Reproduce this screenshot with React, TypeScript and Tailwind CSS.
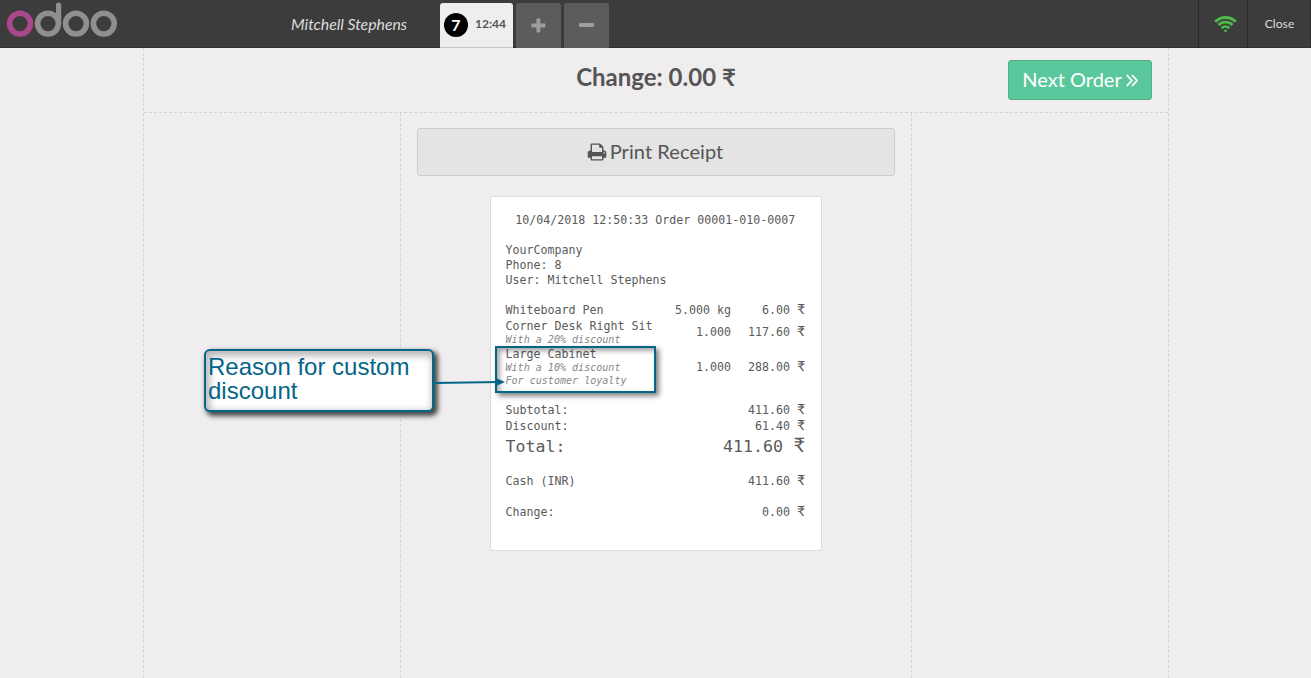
import React from "react";

const mono = "font-['DejaVu_Sans_Mono',monospace]";

function Rupee({ className }: { className: string }) {
  return (
    <span className={`inline-flex justify-end font-['Lato','DejaVu_Sans',sans-serif] ${className}`}>
      ₹
    </span>
  );
}

function Logo() {
  return (
    <svg className="ml-[6px] h-[38px] w-[112px]" viewBox="0 0 112 38" fill="none" strokeWidth="5.6" aria-label="odoo">
      <circle cx="14" cy="23.6" r="10.4" stroke="#a8478a" />
      <g stroke="#8f8f8f">
        <circle cx="42" cy="23.6" r="10.4" />
        <circle cx="70" cy="23.6" r="10.4" />
        <circle cx="97.8" cy="23.6" r="10.4" />
        <path d="M52.6 23.6V5" strokeLinecap="round" strokeWidth="5.2" />
      </g>
    </svg>
  );
}

function Wifi() {
  return (
    <svg className="h-[17px] w-[23px]" viewBox="0 0 23 17" fill="none" stroke="#4eb84a" strokeWidth="2.900">
      <path d="M1.200 5.700a14.600 14.600 0 0 1 20.600 0" />
      <path d="M4.500 9a9.900 9.900 0 0 1 14 0" />
      <path d="M7.700 12.200a5.400 5.400 0 0 1 7.600 0" />
      <path d="M11.500 16.600l-2-2a2.900 2.900 0 0 1 4 0z" fill="#4eb84a" stroke="none" />
    </svg>
  );
}

function Printer() {
  return (
    <svg className="mr-[3px] h-[20px] w-[20px]" viewBox="0 0 1792 1792" fill="currentColor">
      <path d="M448 1536h896v-256h-896v256zm0-640h896v-384h-160q-40 0-68-28t-28-68v-160h-640v640zm1152 64q0-26-19-45t-45-19-45 19-19 45 19 45 45 19 45-19 19-45zm128 0v416q0 13-9.5 22.5t-22.5 9.5h-224v160q0 40-28 68t-68 28h-960q-40 0-68-28t-28-68v-160h-224q-13 0-22.5-9.5t-9.5-22.5v-416q0-79 56.5-135.5t135.5-56.5h64v-544q0-40 28-68t68-28h672q40 0 88 20t76 48l152 152q28 28 48 76t20 88v256h64q79 0 135.5 56.5t56.5 135.5z" />
    </svg>
  );
}

function Header() {
  return (
    <header className="flex h-12 shrink-0 bg-[#3c3c3c] shadow-[inset_0_-1px_0_#352f31]">
      <div className="w-[291px]">
        <Logo />
      </div>
      <div className="w-[149px] pt-[12px] text-[15.8px] leading-6 text-[#dddddd] italic">Mitchell Stephens</div>
      <div className="flex items-start gap-[3px] pt-[3px]">
        <div className="flex h-[45px] w-[73px] items-center rounded-t-[3px] border-b border-[#c5c5c5] bg-[#eeeeee] pl-1">
          <span className="flex size-6 items-center justify-center rounded-full bg-black text-[16px] font-bold text-white">7</span>
          <span className="ml-[7px] pb-[2px] text-[12px] font-bold text-[#555555]">12:44</span>
        </div>
        <div className="flex h-[45px] w-[45px] items-center justify-center rounded-t-[3px] bg-[#5c5c5c] pb-px">
          <svg className="size-[15px]" viewBox="0 0 15 15" fill="#9e9e9e">
            <path d="M5.5 1.2a.8.8 0 0 1 .8-.8h2.2a.8.8 0 0 1 .8.8v4.4h4.4a.8.8 0 0 1 .8.8v2.2a.8.8 0 0 1-.8.8H9.300v4.400a.8.8 0 0 1-.8.8H6.300a.8.8 0 0 1-.8-.8V9.400H1.200a.8.8 0 0 1-.8-.8V6.400a.8.8 0 0 1 .8-.8h4.300z" />
          </svg>
        </div>
        <div className="flex h-[45px] w-[45px] items-center justify-center rounded-t-[3px] bg-[#5c5c5c] pb-[2px]">
          <span className="h-1 w-[15px] rounded-[1px] bg-[#9e9e9e]" />
        </div>
      </div>
      <div className="ml-auto flex">
        <div className="flex w-[49px] items-center justify-center border-l border-[#2b2b2b] pl-[4px]">
          <Wifi />
        </div>
        <div className="w-[64px] border-x border-[#2b2b2b] pl-px text-center text-[12px] leading-[48px] tracking-[0.1px] text-[#dddddd]">Close</div>
      </div>
    </header>
  );
}

type Line = { name: string; notes: string[]; qty: string; price: string; height: string };

const lines: Line[] = [
  { name: "Whiteboard Pen", notes: [], qty: "5.000 kg", price: "6.00", height: "h-[15px]" },
  { name: "Corner Desk Right Sit", notes: ["With a 20% discount"], qty: "1.000", price: "117.60", height: "mt-px h-[27px]" },
  {
    name: "Large Cabinet",
    notes: ["With a 10% discount", "For customer loyalty"],
    qty: "1.000",
    price: "288.00",
    height: "mt-px h-[40px]",
  },
];

function Amount({ value }: { value: string }) {
  return (
    <span className="whitespace-pre">
      {value} <Rupee className="w-[8px] text-[14px] leading-[12px]" />
    </span>
  );
}

function Sum({ label, value, className }: { label: string; value: string; className: string }) {
  return (
    <div className={`flex items-start justify-between leading-[16px] ${className}`}>
      <span>{label}</span>
      <Amount value={value} />
    </div>
  );
}

function Receipt() {
  return (
    <section
      className={`mx-auto mt-5 h-[355px] w-[332px] rounded-[3px] border border-[#dcdcdc] bg-white pt-[16px] pr-[16px] pl-[14.5px] text-[11.63px] leading-[15px] text-[#5a5a5a] ${mono}`}
    >
      <div className="text-center">10/04/2018 12:50:33 Order 00001-010-0007</div>
      <div className="mt-[15px]">
        <div>YourCompany</div>
        <div>Phone: 8</div>
        <div>User: Mitchell Stephens</div>
      </div>
      <div className="mt-[15px]">
        {lines.map((l) => (
          <div key={l.name} className={`flex items-center ${l.height}`}>
            <div className="w-[150px] self-start whitespace-nowrap">
              <div className="-mb-px">{l.name}</div>
              {l.notes.map((n) => (
                <div key={n} className="text-[10.05px] leading-[13px] text-[#888888] italic">
                  {n}
                </div>
              ))}
            </div>
            <div className="w-[75.5px] text-right whitespace-nowrap">{l.qty}</div>
            <div className="flex-1 text-right whitespace-nowrap">
              <Amount value={l.price} />
            </div>
          </div>
        ))}
      </div>
      <div className="mt-[15px]">
        <Sum label="Subtotal:" value="411.60" className="h-4" />
        <Sum label="Discount:" value="61.40" className="h-4" />
        <div className="flex h-[24px] items-start justify-between pt-[3px] text-[16.6px] leading-[19px]">
          <span>Total:</span>
          <span className="whitespace-pre">
            411.60 <Rupee className="w-[12px] text-[20px] leading-[14px]" />
          </span>
        </div>
        <Sum label="Cash (INR)" value="411.60" className="mt-[15px] h-4" />
        <Sum label="Change:" value="0.00" className="mt-[15px] h-4" />
      </div>
    </section>
  );
}

function Annotation() {
  return (
    <>
      <div className="absolute top-[349px] left-[204px] h-[63px] w-[230px] rounded-[6px] border-2 border-[#046587] bg-white pt-[4px] pl-[2px] font-['Liberation_Sans',sans-serif] text-[24px] leading-6 text-[#046587] shadow-[3px_3px_5px_1px_rgba(0,0,0,0.7),inset_2px_3px_7px_2px_rgba(0,0,0,0.28)]">
        Reason for custom
        <br />
        discount
      </div>
      <div className="absolute top-[346px] left-[495px] h-[47px] w-[161px] border-2 border-[#046587] shadow-[3px_3px_5px_rgba(0,0,0,0.5),inset_3px_3px_5px_rgba(0,0,0,0.35)]" />
      <svg className="absolute top-[376px] left-[434px] h-[13px] w-[72px]" viewBox="0 0 72 13">
        <path d="M0 7L66 6" stroke="#046587" strokeWidth="2" />
        <path d="M63 2.500L71 6L63 9.500z" fill="#046587" />
      </svg>
    </>
  );
}

export default function App() {
  return (
    <div className="relative flex h-[678px] w-[1311px] flex-col overflow-hidden bg-[#efedee] font-['Lato',sans-serif] text-[#555555]">
      <Header />
      <main className="ml-[143px] flex w-[1026px] flex-1 flex-col border-x border-dashed border-[#d3d3d3]">
        <div className="grid h-[65px] grid-cols-[1fr_auto_1fr] border-b border-dashed border-[#d3d3d3]">
          <h1 className="col-start-2 pt-[13px] text-[24px] leading-8 font-bold">
            Change: 0.00 ₹
          </h1>
          <button className="mt-3 mr-4 flex h-10 w-36 items-center justify-center justify-self-end rounded-[3px] border border-[#4eb08a] bg-[#5bc79d] pb-[2px] text-[20px] text-white">
            Next Order
            <svg className="mt-[2px] ml-1 h-[13px] w-3" viewBox="0 0 12 13" fill="none" stroke="currentColor" strokeWidth="1.800">
              <path d="M.8 1l5 5.500l-5 5.500M6 1l5 5.500l-5 5.500" />
            </svg>
          </button>
        </div>
        <div className="mx-auto w-[512px] flex-1 border-x border-dashed border-[#d3d3d3] px-4 pt-[15px]">
          <button className="flex h-12 w-full items-center justify-center rounded-[3px] border border-[#cccccc] bg-[#e4e4e4] pr-[2px] text-[20px]">
            <Printer />
            <span className="pb-[2px] tracking-[0.08px]">Print Receipt</span>
          </button>
          <Receipt />
        </div>
      </main>
      <Annotation />
    </div>
  );
}
